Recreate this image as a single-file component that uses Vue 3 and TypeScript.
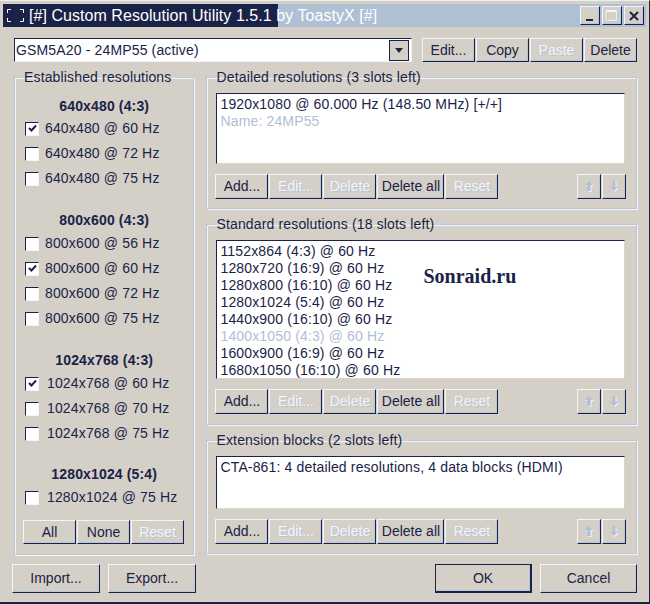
<template>
  <div class="window">
    <div class="titlebar">
      <svg class="app-icon" width="17" height="13" viewBox="0 0 17 13">
        <path d="M.5 4V.5H4M13 .5h3.5V4M.5 9v3.5H4M13 12.5h3.5V9" fill="none" stroke="#fff" />
      </svg>
      <span class="title">[#] Custom Resolution Utility 1.5.1 by ToastyX [#]</span>
      <div class="caption-buttons">
        <button class="btn caption">
          <svg width="10" height="10" viewBox="0 0 10 10"><path d="M1 8h7v2H1z" fill="#1a2347" /></svg>
        </button>
        <button class="btn caption">
          <svg width="12" height="12" viewBox="0 0 12 12">
            <path d="M1.5 1.5h10v10h-10z" fill="none" stroke="#b4c2d6" />
            <path d="M.5.5h10v10H.5zM.5 1.5h10" fill="none" stroke="#f2f4f6" />
          </svg>
        </button>
        <button class="btn caption">
          <svg width="10" height="10" viewBox="0 0 10 10"><path d="M1 1l8 8M9 1L1 9" fill="none" stroke="#1a2347" stroke-width="2" /></svg>
        </button>
      </div>
    </div>

    <div class="top-row">
      <div class="combo">
        <span class="combo-text">GSM5A20 - 24MP55 (active)</span>
        <span class="combo-arrow"><i /></span>
      </div>
      <div class="btn-group top-buttons">
        <button v-for="b in topButtons" :key="b.label" class="btn" :class="{ off: b.off }">{{ b.label }}</button>
      </div>
    </div>

    <div class="columns">
      <fieldset class="group left">
        <legend>Established resolutions</legend>
        <section v-for="g in established" :key="g.title" class="res-group">
          <h4>{{ g.title }}</h4>
          <label v-for="r in g.rates" :key="r.hz" class="check" :class="{ wide: g.wide }">
            <span class="box"><svg v-if="r.on" width="9" height="9" viewBox="0 0 9 9"><path d="M1 4l2.5 2.5L8 1.5" fill="none" stroke="#1a2347" stroke-width="2" /></svg></span>
            {{ g.res }} @ {{ r.hz }} Hz
          </label>
        </section>
        <div class="btn-group left-buttons">
          <button class="btn">All</button>
          <button class="btn">None</button>
          <button class="btn off">Reset</button>
        </div>
      </fieldset>

      <div class="right">
        <fieldset v-for="p in panels" :key="p.title" class="group panel">
          <legend>{{ p.title }}</legend>
          <div class="listbox" :style="{ height: p.height + 'px' }">
            <div v-for="l in p.lines" :key="l.text" :class="{ muted: l.muted }">{{ l.text }}</div>
            <span v-if="p.mark" class="watermark">Sonraid.ru</span>
          </div>
          <div class="panel-actions">
            <div class="btn-group">
              <button class="btn add">Add...</button>
              <button class="btn off edit">Edit...</button>
              <button class="btn off del">Delete</button>
              <button class="btn del-all">Delete all</button>
              <button class="btn off reset">Reset</button>
            </div>
            <div class="btn-group arrows">
              <button class="btn off">
                <svg width="11" height="13" viewBox="0 0 11 13">
                  <path d="M6 2l4 4H7.5v6h-3V6H2z" fill="#f2f4f6" />
                  <path d="M5 1l4 4H6.5v6h-3V5H1z" fill="#b0c0d4" />
                </svg>
              </button>
              <button class="btn off">
                <svg width="11" height="13" viewBox="0 0 11 13">
                  <path d="M6 12l4-4H7.5V2h-3v6H2z" fill="#f2f4f6" />
                  <path d="M5 11l4-4H6.5V1h-3v6H1z" fill="#b0c0d4" />
                </svg>
              </button>
            </div>
          </div>
        </fieldset>
      </div>
    </div>

    <div class="bottom-row">
      <button class="btn wide-btn">Import...</button>
      <button class="btn wide-btn">Export...</button>
      <span class="spacer" />
      <button class="btn wide-btn ok">OK</button>
      <button class="btn wide-btn cancel">Cancel</button>
    </div>
  </div>
</template>

<script setup lang="ts">
interface Rate { hz: number; on?: boolean }
interface ResGroup { title: string; res: string; wide?: boolean; rates: Rate[] }
interface Line { text: string; muted?: boolean }
interface Panel { title: string; height: number; mark?: boolean; lines: Line[] }

const topButtons = [
  { label: 'Edit...' },
  { label: 'Copy' },
  { label: 'Paste', off: true },
  { label: 'Delete' },
]

const established: ResGroup[] = [
  { title: '640x480 (4:3)', res: '640x480', rates: [{ hz: 60, on: true }, { hz: 72 }, { hz: 75 }] },
  { title: '800x600 (4:3)', res: '800x600', rates: [{ hz: 56 }, { hz: 60, on: true }, { hz: 72 }, { hz: 75 }] },
  { title: '1024x768 (4:3)', res: '1024x768', wide: true, rates: [{ hz: 60, on: true }, { hz: 70 }, { hz: 75 }] },
  { title: '1280x1024 (5:4)', res: '1280x1024', wide: true, rates: [{ hz: 75 }] },
]

const panels: Panel[] = [
  {
    title: 'Detailed resolutions (3 slots left)',
    height: 71,
    lines: [
      { text: '1920x1080 @ 60.000 Hz (148.50 MHz) [+/+]' },
      { text: 'Name: 24MP55', muted: true },
    ],
  },
  {
    title: 'Standard resolutions (18 slots left)',
    height: 139,
    mark: true,
    lines: [
      { text: '1152x864 (4:3) @ 60 Hz' },
      { text: '1280x720 (16:9) @ 60 Hz' },
      { text: '1280x800 (16:10) @ 60 Hz' },
      { text: '1280x1024 (5:4) @ 60 Hz' },
      { text: '1440x900 (16:10) @ 60 Hz' },
      { text: '1400x1050 (4:3) @ 60 Hz', muted: true },
      { text: '1600x900 (16:9) @ 60 Hz' },
      { text: '1680x1050 (16:10) @ 60 Hz' },
    ],
  },
  {
    title: 'Extension blocks (2 slots left)',
    height: 53,
    lines: [{ text: 'CTA-861: 4 detailed resolutions, 4 data blocks (HDMI)' }],
  },
]
</script>

<style>
html, body { margin: 0; background: #d4d0c8; }
</style>

<style scoped>
.window {
  box-sizing: border-box;
  width: 650px;
  height: 604px;
  padding: 3px 3px 0;
  border-bottom: 2px solid #1a2347;
  border-right: 1px solid #1a2347;
  border-top: 1px solid #eee;
  background: #d4d0c8;
  color: #1a2347;
  font: 14px/17px "Liberation Sans", sans-serif;
  letter-spacing: 0.15px;
  overflow: hidden;
}

.titlebar {
  display: flex;
  align-items: center;
  height: 23px;
  padding-left: 4px;
  background: linear-gradient(90deg, #1a2347 275px, #b0c0d4 275px);
  color: #fff;
}

.app-icon { margin-right: 5px; }
.title { font-size: 16px; letter-spacing: 0.05px; white-space: nowrap; }

.caption-buttons {
  display: flex;
  gap: 2px;
  margin-left: auto;
  margin-right: 2px;
}

.btn {
  display: flex;
  align-items: center;
  justify-content: center;
  box-sizing: border-box;
  padding: 0;
  border: 1px solid;
  border-color: #f2f4f6 #1a2347 #1a2347 #f2f4f6;
  box-shadow: inset -1px -1px 0 #b8c6d8;
  background: #d4d0c8;
  color: #1a2347;
  font: inherit;
  white-space: nowrap;
}

.btn.off { color: #f2f4f6; text-shadow: 1px 1px 0 #b8c6d8; }

.caption { width: 20px; height: 19px; }

.top-row {
  display: flex;
  gap: 10px;
  margin: 11px 9px 0 11px;
}

.combo {
  display: flex;
  align-items: center;
  justify-content: space-between;
  box-sizing: border-box;
  width: 398px;
  height: 24px;
  padding: 1px 2px 0 1px;
  border: 1px solid;
  border-color: #1a2347 #f2f4f6 #f2f4f6 #1a2347;
  background: #fff;
}

.combo-arrow {
  display: flex;
  align-items: center;
  justify-content: center;
  width: 18px;
  height: 19px;
  border: 1px solid #1a2347;
  background: #d4d0c8;
}

.combo-arrow i {
  border: 4px solid transparent;
  border-top: 5px solid #1a2347;
  border-bottom: 0;
}

.btn-group { display: flex; gap: 1px; }

.top-buttons .btn { width: 53px; height: 24px; }

.columns {
  display: flex;
  gap: 12px;
  margin: 7px 9px 0 11px;
}

.group {
  box-sizing: border-box;
  min-width: 0;
  margin: 0;
  border: 1px solid #b8c6d8;
  box-shadow: 1px 1px 0 #f2f4f6, inset 1px 1px 0 #f2f4f6;
}

.group legend {
  padding: 0 4px 0 2px;
  margin-left: -1px;
  line-height: 17px;
}

.left {
  display: flex;
  flex-direction: column;
  width: 181px;
  height: 486px;
  padding: 0 8px;
}

.res-group h4 {
  margin: 12px 0 1px;
  font-size: 14px;
  line-height: 17px;
  font-weight: 700;
  text-align: center;
}

.res-group + .res-group h4 { margin: 21px 0 2px; }
.res-group:last-of-type h4 { margin-top: 20px; }

.check {
  display: flex;
  align-items: center;
  gap: 6px;
  height: 25px;
  margin-left: 2px;
}

.check.wide { gap: 8px; }

.box {
  display: flex;
  align-items: center;
  justify-content: center;
  box-sizing: border-box;
  flex: none;
  width: 14px;
  height: 14px;
  border: 1px solid;
  border-color: #1a2347 #f2f4f6 #f2f4f6 #1a2347;
  background: #fff;
}

.left-buttons { margin-top: 10px; }

.left-buttons .btn { width: 53px; height: 24px; }

.right {
  display: flex;
  flex-direction: column;
  gap: 7px;
  width: 432px;
}

.panel { padding: 0 11px 0 8px; }

.panel .listbox { margin: 7px 0 0 1px; }

.listbox {
  position: relative;
  box-sizing: border-box;
  padding: 2px 3px 0;
  border: 1px solid;
  border-color: #1a2347 #d9d6ce #d9d6ce #1a2347;
  background: #fff;
  overflow: hidden;
  white-space: nowrap;
}

.muted { color: #b0c0d4; }

.watermark {
  position: absolute;
  left: 206px;
  top: 22px;
  color: #1a2347;
  font: 700 20px/26px "Liberation Serif", serif;
  letter-spacing: 0;
}

.panel-actions {
  display: flex;
  justify-content: space-between;
  margin: 10px 0 9px;
}

.panel:nth-child(2) .panel-actions { margin-bottom: 10px; }

.panel-actions .btn { height: 25px; }
.add, .edit, .del, .reset { width: 53px; }
.del-all { width: 67px; }

.arrows { margin-right: -1px; }
.arrows .btn { width: 24px; }

.bottom-row {
  display: flex;
  gap: 8px;
  margin: 9px 9px 0 9px;
}

.wide-btn { width: 88px; height: 29px; }
.spacer { flex: 1; }
.ok { width: 97px; border: 2px solid #1a2347; border-top-width: 1px; border-left-width: 1px; }
.cancel { width: 97px; }
</style>
